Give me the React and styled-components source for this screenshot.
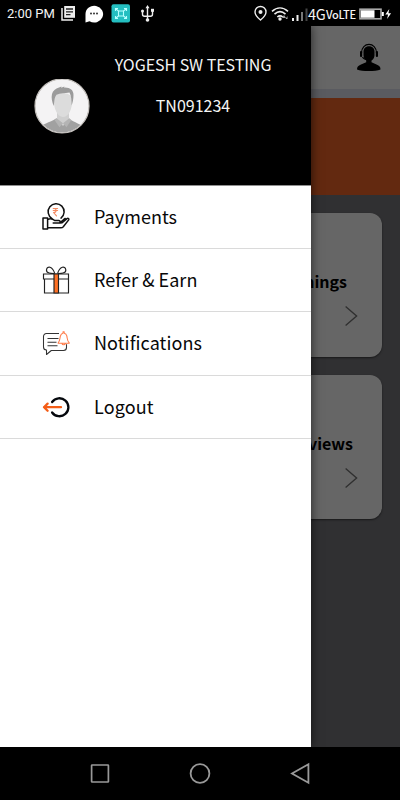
import React from 'react';
import styled, { createGlobalStyle } from 'styled-components';

const GlobalStyle = createGlobalStyle`
  * { box-sizing: border-box; }
  body { margin: 0; background: #000; }
  svg { display: block; flex: none; }
`;

const Screen = styled.div`
  width: 400px;
  height: 800px;
  display: flex;
  flex-direction: column;
  overflow: hidden;
  background: #000;
  font-family: "Noto Sans CJK SC", "Noto Sans", sans-serif;
`;

const StatusBar = styled.header`
  height: 26px;
  flex: none;
  display: flex;
  align-items: center;
  padding: 1px 8px 0 7px;
  color: #f4f4f4;
  font-family: Roboto, sans-serif;
`;

const Clock = styled.span`
  width: 53px;
  font-size: 13px;
  line-height: 26px;
  letter-spacing: 0;
  white-space: nowrap;
`;

const StatusGroup = styled.div`
  display: flex;
  align-items: center;
  margin-left: ${(p) => p.$push ? 'auto' : '0'};
`;

const NetworkLabel = styled.span`
  width: ${(p) => p.$width}px;
  margin-right: ${(p) => p.$gap}px;
  font-size: ${(p) => p.$size}px;
  line-height: 24px;
  letter-spacing: ${(p) => p.$track || 0}px;
  font-weight: ${(p) => p.$weight || 400};
  font-family: "Noto Sans CJK SC", sans-serif;
  white-space: nowrap;
`;

const Stage = styled.main`
  position: relative;
  height: 721px;
  flex: none;
  overflow: hidden;
`;

const Page = styled.div`
  height: 100%;
  background: #78787d;
`;

const PageHeader = styled.div`
  height: 72px;
  display: flex;
  justify-content: flex-end;
  padding: 17px 18px 0 0;
  background: #fff;
  border-bottom: 9px solid #e1e3f0;
`;

const Banner = styled.div`
  height: 97px;
  background: #f76628;
`;

const Cards = styled.div`
  display: flex;
  flex-direction: column;
  align-items: flex-end;
  gap: 18px;
  padding: 17.6px 18px 0;
`;

const Card = styled.section`
  width: 173px;
  height: 144.4px;
  display: flex;
  flex-direction: column;
  align-items: flex-end;
  padding: 55px 24px 0 0;
  border-radius: 12px;
  background: #fff;
  box-shadow: 0 1px 2px rgba(0, 0, 0, 0.5);
`;

const CardTitle = styled.h2`
  margin: 0 ${(p) => p.$inset}px 11px 0;
  font-size: 16px;
  line-height: 26px;
  font-weight: 700;
  color: #000;
`;

const Scrim = styled.div`
  position: absolute;
  inset: 0;
  background: rgba(0, 0, 0, 0.6);
`;

const Drawer = styled.aside`
  position: absolute;
  top: 0;
  bottom: 0;
  left: 0;
  width: 311px;
  background: #fff;
  box-shadow: 0 0 10px rgba(0, 0, 0, 0.65);
`;

const Profile = styled.div`
  height: 160px;
  display: flex;
  padding: 26px 0 0 34px;
  background: #000;
  border-bottom: 1px solid #8f8f8f;
  color: #f5f5f5;
`;

const Avatar = styled.div`
  width: 56px;
  height: 56px;
  margin-top: 27px;
`;

const Identity = styled.div`
  width: 206px;
  display: flex;
  flex-direction: column;
  align-items: center;
  gap: 17px;
`;

const IdentityLine = styled.span`
  font-size: 16px;
  line-height: 24px;
  letter-spacing: ${(p) => p.$track}px;
  white-space: nowrap;
`;

const Menu = styled.nav`
  display: flex;
  flex-direction: column;
`;

const MenuItem = styled.div`
  height: 63.2px;
  display: flex;
  align-items: center;
  gap: 23px;
  padding-left: 41px;
  border-bottom: 1px solid #dadada;
`;

const MenuLabel = styled.span`
  margin-top: -2px;
  font-size: 18px;
  line-height: 28px;
  letter-spacing: ${(p) => p.$track}px;
  color: #080808;
`;

const NavBar = styled.footer`
  height: 53px;
  flex: none;
  display: flex;
  justify-content: center;
  align-items: center;
  gap: 76px;
  background: #000;
`;

const PaymentsIcon = () => (
  <svg width="30" height="30" viewBox="0 0 30 30" fill="none" stroke="#111" strokeWidth="1.5" strokeLinejoin="round" strokeLinecap="round">
    <path d="M11 16.6A8 8 0 1 1 20 16.1" />
    <path d="M12.2 6.5h4.4M12.2 8.5h4.4M12.5 6.5c3.5 0 3.5 4 0 4l3 3.3" stroke="#f58a61" strokeWidth="1.1" />
    <path d="M2 16h4.6v11.1H2zM6.6 17.6c2.5-1.5 5-1 7.1.9h4.1c1.8 0 1.8 2.6 0 2.6h-5.6M19 20.8l4-3.6 1.2-.7M19 21l2.2-.2 4.8-4.2c1.1-.8 2.4.2 1.7 1.3l-5.4 6.8c-.7.8-1.4 1.1-2.4 1.1H6.6" />
  </svg>
);

const GiftIcon = () => (
  <svg width="30" height="30" viewBox="0 0 30 30" fill="none" stroke="#222" strokeWidth="1.15">
    <path d="M3.5 14v14h24V14M2.5 9h25v5h-25z" />
    <path d="M13 9h4.5v19H13z" fill="#ff7125" />
    <path d="M13.5 8.5C10.5 8.6 5 8.4 5.5 4.8 6.1.6 11.5.9 13.7 8.5M16.8 8.5c3 .1 8.5-.1 8-3.7-.6-4.2-6-3.9-8.2 3.7" />
  </svg>
);

const NotificationsIcon = () => (
  <svg width="30" height="30" viewBox="0 0 30 30" fill="none" stroke="#333" strokeWidth="1.05" strokeLinejoin="round">
    <path d="M18 5.5H5.5c-1.8 0-3 1.2-3 3V19c0 1.7 1.2 3 3 3v4.5l4.8-4h12.2c1.8 0 3-1.2 3-3v-3.3" />
    <path d="M6.5 10.5h11M6.5 14.2h9M6.5 17.8h10" />
    <path d="M17.2 14.7c1.8-1.3 1.5-4.3 2.2-6.7.4-1.5 1.2-2.4 2.6-2.7V3.7h1.2v1.6c1.5.3 2.3 1.2 2.6 2.7.6 2.4.3 5.4 2.4 6.7v.6h-11zM21 15.7c.3 1.5 3 1.5 3.3 0" stroke="#ff7c4a" />
  </svg>
);

const LogoutIcon = () => (
  <svg width="30" height="30" viewBox="0 0 30 30" fill="none" strokeLinecap="round" strokeLinejoin="round">
    <path d="M11.1 10a9 9 0 1 1 0 10.5" stroke="#05080d" strokeWidth="2.3" />
    <path d="M20 15.2H3M6.6 11.6 3 15.2l3.6 3.6" stroke="#f45d17" strokeWidth="2.3" />
  </svg>
);

const Portrait = () => (
  <svg width="56" height="56" viewBox="0 0 56 56">
    <defs><clipPath id="portrait"><circle cx="28" cy="27" r="26.5" /></clipPath></defs>
    <circle cx="28" cy="27" r="27" fill="#f4f3f4" />
    <g clipPath="url(#portrait)">
      <path d="M5 50c2-5 11-6.500 17-10.500h13c5 4 13 5.500 16 10.500v6H5z" fill="#a1a1a1" />
      <path d="M23 33h12v7.500L29 47l-6-6.500z" fill="#cfcfcf" />
      <path d="M19.500 20c0-8 18-8 18.500 0 .8 10-3.500 18-9 18s-9.500-9-9.500-18z" fill="#dcdcdc" />
      <path d="M19.700 27c-1.500-4-2.700-8-1.700-12 .8-3.200 3.500-5.500 7-6.500l2.500-1-.4 1.300 3.400-1.300-.6 1c6-.4 9.700 2.500 9.600 7.500 0 4-.8 7.500-1.900 10.500 0-5-.1-9-2.100-13-5 1.200-9 .3-13 2.200-2.500 3-2 7-2.800 11.300z" fill="#9b9b9b" />
      <path d="m22.500 39.300 6.500 5-3.500 4-5-7.300zM35.300 39.300l-6.300 5 3.500 4 4.800-7.300z" fill="#b4b4b4" />
    </g>
    <circle cx="28" cy="27" r="27" fill="none" stroke="#c5c1bd" strokeWidth="1.2" />
  </svg>
);

const SupportIcon = () => (
  <svg width="26" height="29" viewBox="0 0 26 29" fill="#000">
    <path d="M7.5 8.5c0-7 11-7 11 0v3c0 4-2 6.500-5.500 6.500s-5.500-2.500-5.500-6.500z" />
    <path d="M10.200 15v4.300L5 21.400c-3 1.200-4 2.400-4 5.100 5 2 18.500 2 23.500 0 0-2.700-1-3.900-4-5.100l-5-2.100V15z" />
    <path d="M5.500 10C5.500-1.400 20.500-1.400 20.500 10M6.500 14c1 2.100 3 2.600 6 2.600" fill="none" stroke="#000" strokeWidth="1.2" />
    <rect x="4" y="8" width="2.200" height="6" rx="1" /><rect x="19.800" y="8" width="2.200" height="6" rx="1" />
  </svg>
);

const Chevron = () => (
  <svg width="15" height="22" viewBox="0 0 15 22" fill="none" stroke="#777" strokeWidth="1.4">
    <path d="m2.600 1.500 11 9.500-11 9.500" />
  </svg>
);

const AppIcons = () => (
  <svg width="96" height="22" viewBox="0 0 96 22">
    <path d="M2 5v12h11" fill="none" stroke="#eee" strokeWidth="1.5" />
    <path d="M4.200 3H15v11.800H4.200z" fill="#eee" />
    <path d="M6 6h7M6 8.800h7M6 11.600h4.500" stroke="#222" strokeWidth="1.3" />
    <path d="M25.500 19.500V11a8.800 8.400 0 1 1 4 7.200l-4 1.300z" fill="#fff" />
    <g fill="#333"><circle cx="31" cy="10.500" r="1" /><circle cx="34" cy="10.500" r="1" /><circle cx="37" cy="10.500" r="1" /></g>
    <rect x="51.500" y="1.300" width="18.500" height="18.200" rx="2" fill="#24bfc1" />
    <path d="M58 5.500h-2.500V8M64 5.500h2.500V8M55.500 13v2.500H58M66.500 13v2.500H64M58.500 8h5v5h-5zM58.500 8 56 6M63.500 8 66 6M58.500 13 56 15M63.500 13l2.500 2" fill="none" stroke="#b8ffff" strokeWidth="1.1" />
    <path d="M87.500 4v13M82.500 8v3.200q0 2 2 2h6q2 0 2-2V7.500" fill="none" stroke="#eee" strokeWidth="1.4" />
    <path d="m85.500 5.200 2-3.200 2 3.200z" fill="#eee" /><circle cx="87.500" cy="17" r="1.800" fill="#eee" /><circle cx="82.500" cy="8" r="1.500" fill="#eee" /><path d="M91 5.800h3v3h-3z" fill="#eee" />
  </svg>
);

const SignalIcons = () => (
  <svg width="55" height="18" viewBox="0 0 55 18">
    <path d="M7.500 15S2 10.500 2 7a5.500 5.500 0 0 1 11 0c0 3.500-5.500 8-5.500 8z" fill="none" stroke="#eee" strokeWidth="1.4" />
    <circle cx="7.500" cy="7" r="2" fill="#eee" />
    <g fill="none" stroke="#eee" strokeWidth="1.600"><path d="M19 6.400c5-4.600 11-4.600 16 0M21.500 9.200c3.500-3.200 7.500-3.200 11 0M24.300 12c1.800-1.500 3.700-1.500 5.500 0" /></g>
    <circle cx="27" cy="14" r="1.700" fill="#eee" /><path d="m31 10 2 3h-4zM34.500 11v3h-2" fill="#aaa" />
    <path d="M39 13h2v3h-2zM43.500 10h2v6h-2z" fill="#eee" /><path d="M48 7h2v9h-2z" fill="#777" /><path d="M52.500 3.500h2V16h-2z" fill="#444" />
  </svg>
);

const Battery = () => (
  <svg width="34" height="16" viewBox="0 0 34 16">
    <rect x="2" y="3.200" width="21" height="9.600" fill="none" stroke="#aaa" strokeWidth="1.600" />
    <path d="M3 4.200h13.500v7.600H3zM23.800 6h2v4h-2z" fill="#fff" /><path d="m31.300 3-4 5.500h2.800l-1 4.500 4-5.800h-2.700z" fill="#fff" />
  </svg>
);

export default function App() {
  return (
    <Screen>
      <GlobalStyle />
      <StatusBar>
        <Clock>2:00 PM</Clock>
        <AppIcons />
        <StatusGroup $push>
          <SignalIcons />
          <NetworkLabel $size={14.5} $width={17} $gap={1} $track={-0.3}>4G</NetworkLabel>
          <NetworkLabel $size={11} $width={30} $gap={2} $track={-0.25} $weight={500}>VoLTE</NetworkLabel>
          <Battery />
        </StatusGroup>
      </StatusBar>
      <Stage>
        <Page>
          <PageHeader><SupportIcon /></PageHeader>
          <Banner />
          <Cards>
            <Card><CardTitle $inset={11}>Earnings</CardTitle><Chevron /></Card>
            <Card><CardTitle $inset={5}>Reviews</CardTitle><Chevron /></Card>
          </Cards>
        </Page>
        <Scrim />
        <Drawer>
          <Profile>
            <Avatar><Portrait /></Avatar>
            <Identity>
              <IdentityLine $track={-0.05}>YOGESH SW TESTING</IdentityLine>
              <IdentityLine $track={0}>TN091234</IdentityLine>
            </Identity>
          </Profile>
          <Menu>
            <MenuItem><PaymentsIcon /><MenuLabel $track={0.05}>Payments</MenuLabel></MenuItem>
            <MenuItem><GiftIcon /><MenuLabel $track={0.05}>Refer &amp; Earn</MenuLabel></MenuItem>
            <MenuItem><NotificationsIcon /><MenuLabel $track={0.08}>Notifications</MenuLabel></MenuItem>
            <MenuItem><LogoutIcon /><MenuLabel $track={0.1}>Logout</MenuLabel></MenuItem>
          </Menu>
        </Drawer>
      </Stage>
      <NavBar>
        <svg width="24" height="24" viewBox="0 0 24 24" fill="none" stroke="#999" strokeWidth="1.7"><rect x="3.600" y="3" width="16.800" height="17" rx=".5" /></svg>
        <svg width="24" height="24" viewBox="0 0 24 24" fill="none" stroke="#999" strokeWidth="1.8"><circle cx="12" cy="11.500" r="9.400" /></svg>
        <svg width="24" height="24" viewBox="0 0 24 24" fill="none" stroke="#999" strokeWidth="1.8"><path d="M20.400 2.200v18.600L4 11.500z" /></svg>
      </NavBar>
    </Screen>
  );
}
